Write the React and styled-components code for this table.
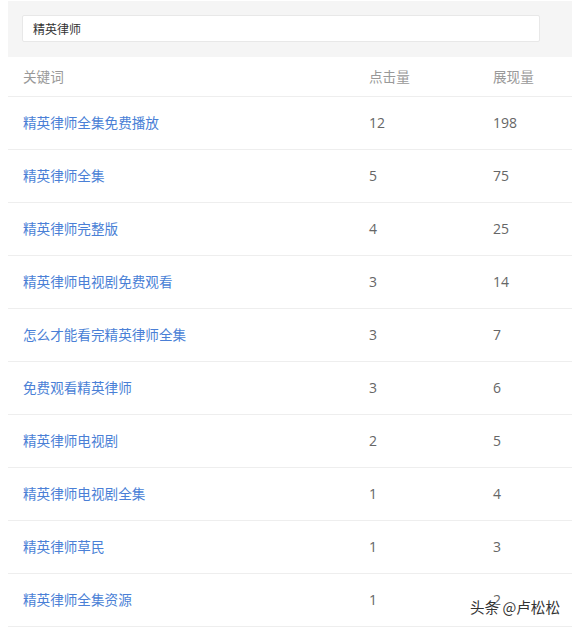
import React from "react";
import styled, { createGlobalStyle } from "styled-components";

const GlobalStyle = createGlobalStyle`
  body {
    margin: 0;
    background: #fff;
    font-family: "Noto Sans CJK SC", "Noto Sans", sans-serif;
  }
`;

const Page = styled.div`
  position: relative;
  width: 572px;
  height: 628px;
  padding: 1px 0 0 8px;
  box-sizing: border-box;
  overflow: hidden;
`;

const SearchBar = styled.div`
  background: #f5f5f5;
  height: 56px;
  padding: 14px 0 0 14px;
  box-sizing: border-box;
`;

const SearchInput = styled.div`
  width: 518px;
  height: 27px;
  background: #fff;
  border: 1px solid #e8e8e8;
  border-radius: 2px;
  box-sizing: border-box;
  padding-left: 10px;
  display: flex;
  align-items: center;
  font-size: 12px;
  color: #333;
`;

const Row = styled.div`
  display: grid;
  grid-template-columns: 346px 124px 1fr;
  align-items: center;
  height: ${({ $head }) => ($head ? "40px" : "53px")};
  border-bottom: 1px solid #eee;
  box-sizing: border-box;
`;

const Cell = styled.div`
  padding-left: 15px;
  font-size: ${({ $num }) => ($num ? "14px" : "13.6px")};
  color: ${({ $head, $link }) => ($head ? "#999" : $link ? "#4a7fd6" : "#666")};
  font-family: ${({ $num }) =>
    $num ? '"Open Sans", "Noto Sans", sans-serif' : '"Noto Sans CJK SC", sans-serif'};
  line-height: 1;
`;

const Watermark = styled.div`
  position: absolute;
  left: 470px;
  top: 596px;
  font-size: 14.6px;
  color: #333;
  font-family: "Noto Sans CJK SC", sans-serif;
  text-shadow: 0 0 2px #fff, 0 0 2px #fff, 0 0 1px #fff;
`;

const rows = [
  ["精英律师全集免费播放", 12, 198],
  ["精英律师全集", 5, 75],
  ["精英律师完整版", 4, 25],
  ["精英律师电视剧免费观看", 3, 14],
  ["怎么才能看完精英律师全集", 3, 7],
  ["免费观看精英律师", 3, 6],
  ["精英律师电视剧", 2, 5],
  ["精英律师电视剧全集", 1, 4],
  ["精英律师草民", 1, 3],
  ["精英律师全集资源", 1, 2],
];

export default function App() {
  return (
    <Page>
      <GlobalStyle />
      <SearchBar>
        <SearchInput>精英律师</SearchInput>
      </SearchBar>
      <Row $head>
        <Cell $head>关键词</Cell>
        <Cell $head>点击量</Cell>
        <Cell $head>展现量</Cell>
      </Row>
      {rows.map(([kw, clicks, views]) => (
        <Row key={kw}>
          <Cell $link>{kw}</Cell>
          <Cell $num>{clicks}</Cell>
          <Cell $num>{views}</Cell>
        </Row>
      ))}
      <Watermark>头条 @卢松松</Watermark>
    </Page>
  );
}
